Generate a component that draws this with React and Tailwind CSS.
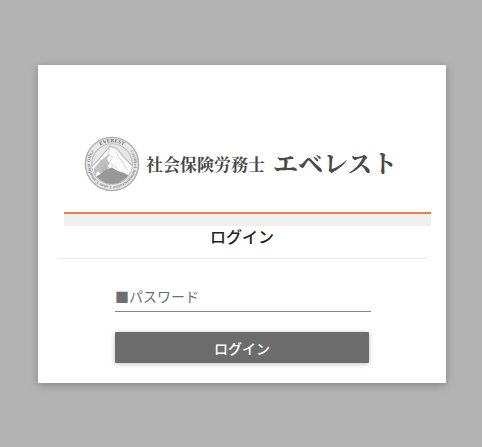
import React from 'react';

const EverestLogo = () => {
  return (
    <svg viewBox="0 0 160 160" className="w-14 h-14 flex-shrink-0" role="img" aria-label="EVEREST">
      <defs>
        <clipPath id="scene">
          <circle cx="80" cy="80" r="57" />
        </clipPath>
        <path id="ringTop" d="M18 80 A62 62 0 0 1 142 80" />
        <path id="ringSmall" d="M117 29 A63 63 0 1 1 43 29" />
      </defs>

      <circle cx="80" cy="80" r="76" fill="#e9e9e9" stroke="#b0b0b0" strokeWidth="4" />
      <circle cx="80" cy="80" r="58" fill="#e6e6e6" stroke="#bcbcbc" strokeWidth="3" />

      {/* Mountain */}
      <g clipPath="url(#scene)">
        <path d="M18 92 L45 64 L74 29 L94 36 L112 58 L142 90 L142 142 L18 142 Z" fill="#fcfcfc" stroke="#b8b8b8" strokeWidth="3" />
        <path d="M74 50 L45 72 L28 94 L30 116 L40 100 L47 108 L57 86 L64 94 L72 78 L66 66 Z" fill="#c0c0c0" />
        <path d="M76 31 L68 52 L82 60 L72 77 L94 92 M92 44 L98 60 L110 74 L124 96" fill="none" stroke="#c6c6c6" strokeWidth="2" />
        <path d="M57 84 L48 97 L52 112 L72 88 Z" fill="#b8b8b8" />
        <path d="M18 122 L38 114 L66 94 L80 90 L98 101 L113 105 L134 116 L140 150 L20 150 Z" fill="#989898" />
      </g>

      {/* Lettering round the rim */}
      <text fontFamily="Liberation Serif, serif" fontSize="15" fontWeight="700" fill="#666666">
        <textPath href="#ringTop" startOffset="50%" textAnchor="middle">EVEREST</textPath>
      </text>
      <text fontFamily="Liberation Serif, serif" fontSize="13" fontWeight="700" fill="#8a8a8a">
        <textPath href="#ringSmall" startOffset="50%" textAnchor="middle">Certified Administrative Labor Consultant Office</textPath>
      </text>
    </svg>
  );
};

const App = () => {
  return (
    <div className="min-h-screen bg-[#b3b3b3] pt-[65px] pb-16 pl-[38px] pr-9 font-['Noto_Sans_CJK_JP','Liberation_Sans',sans-serif]">
      <main className="bg-white pt-[71px] pb-5 shadow-[0_2px_8px_rgba(0,0,0,0.25)]">
        {/* Logo */}
        <div className="flex items-center pl-[46px] text-[#484848] font-['Noto_Serif_CJK_JP','Noto_Sans_CJK_JP',serif] whitespace-nowrap">
          <EverestLogo />
          <div className="flex items-center pb-1">
            <span className="pt-1 ml-1.5 text-[17px] leading-6 font-bold">社会保険労務士</span>
            <span className="ml-2 text-[25px] leading-8 font-bold">エベレスト</span>
          </div>
        </div>

        <div className="mt-5 ml-[26px] mr-[15px] h-[14px] border-t-2 border-[#f47b45] bg-[#efefef]" />

        <h1 className="ml-5 mr-5 h-[33px] border-b border-[#e6e6ec] text-center text-base leading-5 font-medium text-[#222222]">
          ログイン
        </h1>

        {/* Login form */}
        <form className="mt-[26px] ml-[77px] mr-[75px]" onSubmit={(e) => e.preventDefault()}>
          <input
            type="password"
            aria-label="パスワード"
            placeholder="■パスワード"
            className="block w-full h-[27px] pb-1 border-b border-[#858585] text-sm text-[#333333] placeholder:text-[#6e6e6e] outline-none"
          />
          <div className="mt-5 mr-0.5">
            <button
              type="submit"
              className="block w-full h-[31px] rounded-[1px] bg-[#6c6c6c] text-sm font-medium text-white shadow-[0_1px_5px_rgba(0,0,0,0.25)]"
            >
              ログイン
            </button>
          </div>
        </form>
      </main>
    </div>
  );
};

export default App;
